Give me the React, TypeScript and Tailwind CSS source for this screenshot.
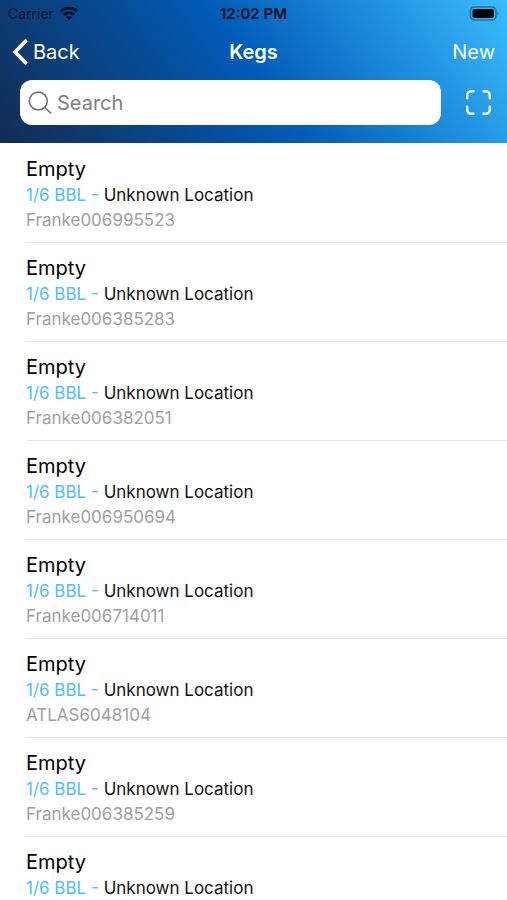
import React from "react";

type Keg = { id: number; status: string; size: string; location: string; serial?: string };

const serials = [
  "Franke006995523",
  "Franke006385283",
  "Franke006382051",
  "Franke006950694",
  "Franke006714011",
  "ATLAS6048104",
  "Franke006385259",
  undefined,
];

const kegs: Keg[] = serials.map((serial, id) => ({
  id,
  status: "Empty",
  size: "1/6 BBL",
  location: "Unknown Location",
  serial,
}));

function StatusBar() {
  return (
    <div className="grid h-7 grid-cols-3 items-center px-2 text-sm text-[#02101f]">
      <div className="flex items-center gap-[6px]">
        <span className="text-[#03152b]">Carrier</span>
        <svg width="18" height="14" viewBox="0 0 18 14" fill="none" stroke="#02101f" strokeWidth="2.8" aria-hidden="true">
          <path d="M1 4.2a11.4 11.4 0 0 1 16 0" />
          <path d="M4 7.7a7.1 7.1 0 0 1 10 0" />
          <path d="M9 13.3 6 10.200a4.200 4.200 0 0 1 6 0Z" fill="#02101f" stroke="none" />
        </svg>
      </div>
      <span className="text-center text-[15px] font-semibold whitespace-nowrap">12:02 PM</span>
      <svg className="justify-self-end" width="30" height="16" viewBox="0 0 30 16" aria-hidden="true">
        <rect x="1.5" y="1" width="25.5" height="13" rx="4" fill="none" stroke="#1c78a6" strokeWidth="1.6" />
        <rect x="3.5" y="3" width="21.5" height="9" rx="2" fill="#000" />
        <path d="M28.3 5.3c1.6.7 1.6 3.7 0 4.4Z" fill="#1c78a6" />
      </svg>
    </div>
  );
}

function Header() {
  return (
    <header className="shrink-0 bg-[linear-gradient(55deg,#122c54_0%,#005bb7_50%,#3abcff_100%)] pb-[18px] text-white">
      <StatusBar />
      <nav className="grid h-12 grid-cols-3 items-center px-3 text-xl">
        <button type="button" className="flex items-center gap-[5px] justify-self-start">
          <svg width="16" height="26" viewBox="0 0 16 26" fill="none" stroke="currentColor" strokeWidth="3.8" strokeLinecap="round" strokeLinejoin="miter" aria-hidden="true">
            <path d="M13.5 2.3 3.200 13l10.300 10.700" />
          </svg>
          Back
        </button>
        <h1 className="text-center font-semibold">Kegs</h1>
        <button type="button" className="justify-self-end">New</button>
      </nav>
      <div className="flex items-center gap-6 pt-1 pr-[15px] pl-5">
        <label className="flex h-[45px] min-w-0 flex-1 items-center gap-[5px] rounded-xl bg-white pl-2">
          <svg className="shrink-0" width="24" height="24" viewBox="0 0 24 24" fill="none" stroke="#77777b" strokeWidth="1.7" strokeLinecap="round" aria-hidden="true">
            <circle cx="10.3" cy="10" r="8.9" />
            <path d="m16.8 16.5 5.700 5.400" />
          </svg>
          <input
            type="search"
            aria-label="Search"
            placeholder="Search"
            className="min-w-0 flex-1 bg-transparent text-xl text-black outline-none placeholder:text-[#808084]"
          />
        </label>
        <button type="button" aria-label="Scan keg">
          <svg width="27" height="26" viewBox="0 0 27 26" fill="none" stroke="currentColor" strokeWidth="2.4" strokeLinecap="round" aria-hidden="true">
            <path d="M2.2 8.2V5.200a4 4 0 0 1 4-4h2.300M18.500 1.200h2.300a4 4 0 0 1 4 4v3M24.800 16.800v3a4 4 0 0 1-4 4h-2.300M8.500 23.800H6.200a4 4 0 0 1-4-4v-3" />
          </svg>
        </button>
      </div>
    </header>
  );
}

function KegRow({ keg }: { keg: Keg }) {
  return (
    <li className="ml-[26px] border-b border-[#e6e6e8] pt-3 pb-[10px]">
      <h2 className="text-xl leading-[26px] text-black">{keg.status}</h2>
      <p className="text-[17px] leading-[27px] text-[#111]">
        <span className="text-[#4fc0f8]">{keg.size} - </span>
        {keg.location}
      </p>
      {keg.serial && <p className="text-[17px] leading-[23px] text-[#a0a0a2]">{keg.serial}</p>}
    </li>
  );
}

export default function App() {
  return (
    <div className="flex h-screen flex-col bg-white font-['Inter','Liberation_Sans',sans-serif]">
      <Header />
      <main className="min-h-0 flex-1 overflow-y-auto [scrollbar-width:none]">
        <ul className="pt-px">
          {kegs.map((keg) => (
            <KegRow key={keg.id} keg={keg} />
          ))}
        </ul>
      </main>
    </div>
  );
}
